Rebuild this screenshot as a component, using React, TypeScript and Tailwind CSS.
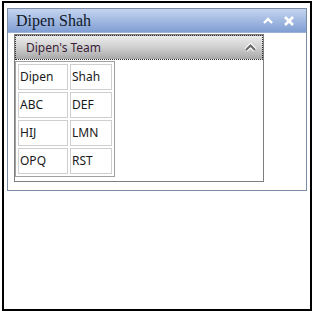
import React from 'react';

const rows = [
  ['Dipen', 'Shah'],
  ['ABC', 'DEF'],
  ['HIJ', 'LMN'],
  ['OPQ', 'RST'],
];

function ChevronUp({ className }: { className?: string }) {
  return (
    <svg width="10" height="7" viewBox="0 0 10 7" className={className}>
      <path d="M1 6 L5 2 L9 6" fill="none" stroke="currentColor" strokeWidth="2.4" />
    </svg>
  );
}

export default function App() {
  return (
    <div className="w-[313px] h-[313px] bg-white relative" style={{ fontFamily: '"Noto Sans", "DejaVu Sans", sans-serif' }}>
      <div className="absolute left-[2px] top-[1px] w-[310px] h-[310px] border-2 border-black bg-white">
        {/* Window */}
        <div className="ml-[3px] mt-[5px] w-[300px] h-[183px] border border-[#7d8ca6] bg-white flex flex-col">
          <div className="h-[24px] flex items-center px-[8px] bg-gradient-to-b from-[#c6d5ef] via-[#a2b9e2] to-[#809ed3] border-b border-[#9cb0d6]">
            <span className="text-[16px] text-[#101828]" style={{ fontFamily: '"Liberation Serif", serif' }}>Dipen Shah</span>
            <div className="ml-auto flex items-center gap-[11px] pr-[4px]">
              <ChevronUp className="text-white" />
              <svg width="10" height="10" viewBox="0 0 10 10">
                <path d="M1 1 L9 9 M9 1 L1 9" stroke="white" strokeWidth="2.6" />
              </svg>
            </div>
          </div>

          {/* Group panel */}
          <div className="ml-[6px] mt-[1px] w-[250px] h-[148px] border border-[#7f7f7f] flex flex-col">
            <div className="h-[25px] flex items-center pl-[10px] pr-[5px] bg-gradient-to-b from-[#ececec] via-[#cfcfcf] to-[#a8a8a8] border border-dotted border-[#333]">
              <span className="text-[12px] text-[#3b1f38]">Dipen's Team</span>
              <svg width="13" height="9" viewBox="0 0 13 9" className="ml-auto">
                <path d="M2 7 L6.5 2.5 L11 7" fill="none" stroke="white" strokeWidth="4.4" />
                <path d="M2 7 L6.5 2.5 L11 7" fill="none" stroke="#6a6a6a" strokeWidth="2.2" />
              </svg>
            </div>
            <div className="pt-[1px]">
              <table className="border border-[#a0a0a0] border-separate border-spacing-[2px]">
                <tbody>
                  {rows.map((r, i) => (
                    <tr key={i}>
                      {r.map((c, j) => (
                        <td
                          key={j}
                          className={`h-[26px] border border-[#cfcfcf] text-[12px] text-[#1a1a1a] pl-[1px] pr-[4px] ${j === 0 ? 'w-[50px]' : 'w-[42px]'}`}
                        >
                          {c}
                        </td>
                      ))}
                    </tr>
                  ))}
                </tbody>
              </table>
            </div>
          </div>
        </div>
      </div>
    </div>
  );
}
